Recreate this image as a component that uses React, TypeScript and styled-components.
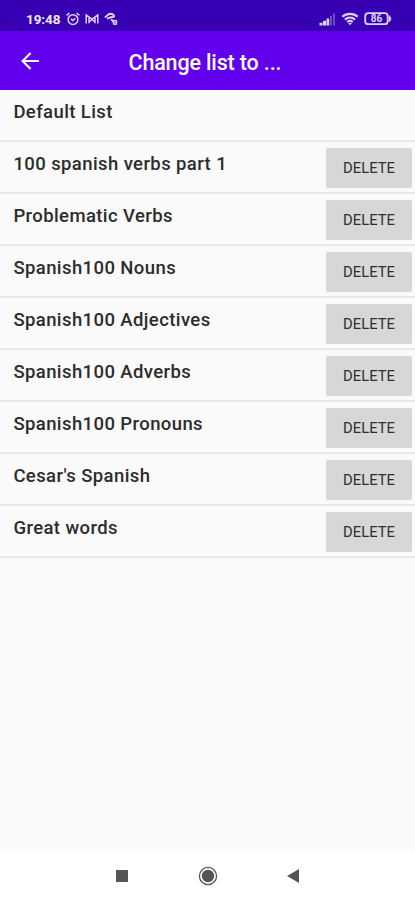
import React from "react";
import styled, { createGlobalStyle } from "styled-components";

const GlobalStyle = createGlobalStyle`
  * { box-sizing: border-box; }
  body { margin: 0; background: #fafafa; font-family: Roboto, "Liberation Sans", sans-serif; }
`;

const Screen = styled.div`
  display: flex;
  flex-direction: column;
  width: 415px;
  height: 900px;
  overflow: hidden;
  background: #fafafa;
`;

const StatusBar = styled.div`
  display: flex;
  align-items: center;
  justify-content: space-between;
  flex: none;
  height: 31px;
  padding: 7px 23px 0 26px;
  background: #3700b3;
  color: #dcd2f5;
`;

const StatusGroup = styled.div<{ $gap: number }>`
  display: flex;
  align-items: center;
  gap: ${(p) => p.$gap}px;
`;

const Clock = styled.span`
  width: 35px;
  font-size: 13.5px;
  font-weight: 700;
  line-height: 16px;
  letter-spacing: -0.1px;
  color: #efeafc;
  white-space: nowrap;
`;

const AppBar = styled.header`
  display: grid;
  grid-template-columns: 128.5px 1fr;
  align-items: center;
  flex: none;
  height: 59px;
  padding-top: 3px;
  background: #6200ee;
  color: #fff;
`;

const BackButton = styled.button`
  display: flex;
  width: 24px;
  height: 24px;
  margin: 0 0 2px 18px;
  padding: 0;
  border: 0;
  background: none;
  color: inherit;
`;

const Title = styled.h1`
  margin: 0;
  padding-top: 1px;
  font-size: 21.5px;
  font-weight: 500;
  line-height: 28px;
  letter-spacing: -0.15px;
  white-space: nowrap;
`;

const List = styled.ul`
  flex: 1;
  margin: 0;
  padding: 0;
  list-style: none;
`;

const Row = styled.li`
  display: flex;
  align-items: flex-start;
  justify-content: space-between;
  height: 52px;
  padding: 0 3px 0 13.4px;
  border-bottom: 2px solid #e6e6e6;
`;

const Name = styled.span`
  padding-top: 10px;
  font-size: 18.5px;
  font-weight: 500;
  line-height: 24px;
  letter-spacing: 0.4px;
  color: #2c2c2c;
  white-space: nowrap;
`;

const DeleteButton = styled.button`
  width: 86px;
  height: 40px;
  margin-top: 6px;
  padding: 0;
  border: 0;
  border-radius: 2px;
  background: #d6d7d7;
  color: #303030;
  font-family: inherit;
  font-size: 14.8px;
  font-weight: 400;
  text-align: center;
`;

const NavBar = styled.nav`
  display: flex;
  align-items: center;
  flex: none;
  height: 49px;
  padding: 0 115px;
  justify-content: space-between;
  background: #fff;
  color: #555;
`;

const lists = [
  "Default List",
  "100 spanish verbs part 1",
  "Problematic Verbs",
  "Spanish100 Nouns",
  "Spanish100 Adjectives",
  "Spanish100 Adverbs",
  "Spanish100 Pronouns",
  "Cesar's Spanish",
  "Great words",
];

const AlarmIcon = () => (
  <svg width="14" height="14" viewBox="0 0 14 14" fill="none" stroke="currentColor" strokeWidth="1.5">
    <circle cx="7" cy="7.6" r="4.9" />
    <path d="M4.8 6.8 6.7 8.6l2.600-2.200M.6 3.400 3.400 1M13.400 3.400 10.600 1" />
  </svg>
);

const MailIcon = () => (
  <svg width="14" height="12" viewBox="0 0 14 12" fill="none" stroke="currentColor" strokeWidth="1.5">
    <path d="M1.200 10.500V2L7 6l5.800-4v8.500M4 10.200V4M10 10.200V4M4 9l3-2.500L10 9" />
  </svg>
);

const KeyIcon = () => (
  <svg width="14" height="14" viewBox="0 0 14 14" fill="none" stroke="currentColor" strokeWidth="1.9">
    <path d="M.8 5.300C3 4.200 4 2 6.200 1.800c2 0 3.800 1.200 4 3.300M3 6.500c2 0 4-2.400 7.200-1.300M7 7.500l2.500 1.700" />
    <path d="M8.500 8.400h4.200v4H9.500z" fill="currentColor" fillOpacity=".7" strokeWidth="1" />
  </svg>
);

const SignalIcon = () => (
  <svg width="17" height="13" viewBox="0 0 17 13" fill="currentColor">
    <path d="M.5 9.800h3v2.700h-3zM4 7.800h3v4.700H4zM7.500 5.500h2.700v7H7.500z" />
    <path d="M11 3h2v9.500h-2zM14 .5h2v12h-2z" opacity=".35" />
  </svg>
);

const WifiIcon = () => (
  <svg width="18" height="14" viewBox="0 0 18 14" fill="none" stroke="currentColor" strokeWidth="2.200">
    <path d="M1.300 4.800C5.500 1 12.500 1 16.700 4.800M3.900 7.600c3-2.700 7.200-2.700 10.200 0M6.300 10c1.700-1.400 3.700-1.400 5.400 0" />
    <path d="m7 11 2 2.200 2-2.200z" fill="currentColor" stroke="none" />
  </svg>
);

const BatteryIcon = () => (
  <svg width="28" height="14" viewBox="0 0 28 14" fill="none" stroke="currentColor">
    <rect x="1.200" y="1.200" width="22.500" height="11" rx="3" strokeWidth="1.800" />
    <path d="M25 3.500v6.500q2-1.300 2-3.250T25 3.500z" fill="currentColor" strokeWidth=".5" />
    <text x="12.500" y="10.200" fill="currentColor" stroke="none" fontSize="10" fontWeight="700" textAnchor="middle">86</text>
  </svg>
);

const BackArrow = () => (
  <svg width="24" height="24" viewBox="0 0 24 24" fill="none" stroke="currentColor" strokeWidth="2.100">
    <path d="M21 12H5M12.600 4 4.600 12l8 8" />
  </svg>
);

const SquareIcon = () => (
  <svg width="14" height="14" viewBox="0 0 14 14" fill="currentColor"><path d="M1 1h12v12H1z" /></svg>
);

const HomeIcon = () => (
  <svg width="20" height="20" viewBox="0 0 20 20" fill="none" stroke="currentColor">
    <circle cx="10" cy="10" r="8.600" strokeWidth="1.300" />
    <circle cx="10" cy="10" r="6.200" fill="currentColor" stroke="none" />
  </svg>
);

const TriangleIcon = () => (
  <svg width="14" height="14" viewBox="0 0 14 14" fill="currentColor"><path d="M13 0v14L1 7z" /></svg>
);

export default function App() {
  return (
    <>
      <GlobalStyle />
      <Screen>
        <StatusBar>
          <StatusGroup $gap={5}>
            <Clock>19:48</Clock>
            <AlarmIcon />
            <MailIcon />
            <KeyIcon />
          </StatusGroup>
          <StatusGroup $gap={5}>
            <SignalIcon />
            <WifiIcon />
            <BatteryIcon />
          </StatusGroup>
        </StatusBar>
        <AppBar>
          <BackButton aria-label="Back"><BackArrow /></BackButton>
          <Title>Change list to ...</Title>
        </AppBar>
        <List>
          {lists.map((name, i) => (
            <Row key={name}>
              <Name>{name}</Name>
              {i > 0 && <DeleteButton>DELETE</DeleteButton>}
            </Row>
          ))}
        </List>
        <NavBar>
          <SquareIcon />
          <HomeIcon />
          <TriangleIcon />
        </NavBar>
      </Screen>
    </>
  );
}
